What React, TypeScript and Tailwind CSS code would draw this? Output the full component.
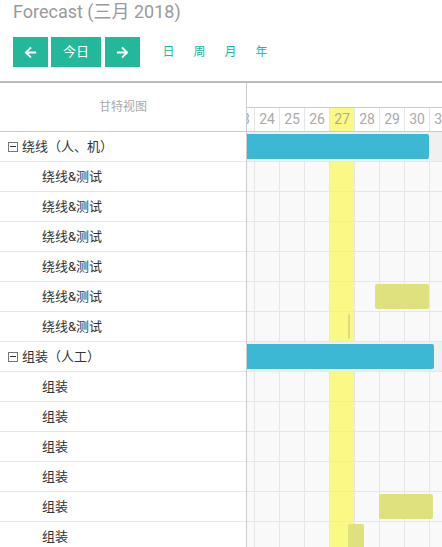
import { FaArrowLeft, FaArrowRight } from "react-icons/fa";

const days = [23, 24, 25, 26, 27, 28, 29, 30, 31];

type Bar = { left: number; width: number; tone: string };
type Row = { kind: "group" | "task"; label: string; bar?: Bar };

const blue = "#3db8d4";
const olive = "#dfe17e";

const rows: Row[] = [
  { kind: "group", label: "绕线（人、机）", bar: { left: -6, width: 188, tone: blue } },
  { kind: "task", label: "绕线&测试" },
  { kind: "task", label: "绕线&测试" },
  { kind: "task", label: "绕线&测试" },
  { kind: "task", label: "绕线&测试" },
  { kind: "task", label: "绕线&测试", bar: { left: 128, width: 54, tone: olive } },
  { kind: "task", label: "绕线&测试", bar: { left: 101, width: 2, tone: "#dcdb86" } },
  { kind: "group", label: "组装（人工）", bar: { left: -6, width: 193, tone: blue } },
  { kind: "task", label: "组装" },
  { kind: "task", label: "组装" },
  { kind: "task", label: "组装" },
  { kind: "task", label: "组装" },
  { kind: "task", label: "组装", bar: { left: 132, width: 54, tone: olive } },
  { kind: "task", label: "组装", bar: { left: 101, width: 16, tone: olive } },
];

const font = { fontFamily: '"Roboto", "Noto Sans CJK SC", sans-serif' };

function MinusBox() {
  return (
    <span className="flex h-[10px] w-[10px] items-center justify-center border border-[#777] bg-white">
      <span className="h-px w-[6px] bg-[#333]" />
    </span>
  );
}

export default function App() {
  return (
    <div className="min-h-screen bg-white" style={font}>
      <div className="px-[13px]">
        <h1 className="h-[24px] text-[18px] leading-[24px] text-[#9a9a9a]">Forecast (三月 2018)</h1>
        <div className="mt-[13px] flex h-[30px] items-center">
          <button className="flex h-[30px] w-[35px] items-center justify-center bg-[#22b899] text-white">
            <FaArrowLeft className="h-[13px] w-[13px]" />
          </button>
          <button className="ml-[3px] h-[30px] w-[50px] bg-[#22b899] text-[13px] text-white">今日</button>
          <button className="ml-[4px] flex h-[30px] w-[35px] items-center justify-center bg-[#22b899] text-white">
            <FaArrowRight className="h-[13px] w-[13px]" />
          </button>
          <div className="ml-[13px] flex text-[12px] text-[#22b899]">
            {["日", "周", "月", "年"].map((t) => (
              <span key={t} className="w-[31px] text-center">
                {t}
              </span>
            ))}
          </div>
        </div>
      </div>

      <div className="mt-[14px] flex border-t-2 border-[#bbb]">
        <div className="w-[247px] shrink-0 border-r border-[#ccc]">
          <div className="flex h-[49px] items-center justify-center border-b border-[#ccc] text-[12px] text-[#aaa]">
            甘特视图
          </div>
          {rows.map((r, i) =>
            r.kind === "group" ? (
              <div key={i} className="flex h-[30px] items-center gap-[4px] border-b border-[#e6e6e6] pl-[8px] text-[13px] text-[#333]">
                <MinusBox />
                <span>{r.label}</span>
              </div>
            ) : (
              <div key={i} className="flex h-[30px] items-center border-b border-[#e6e6e6] pl-[42px] text-[13px] text-[#333]">
                {r.label}
              </div>
            )
          )}
        </div>

        <div className="min-w-0 flex-1 overflow-hidden">
          <div className="h-[25px] border-b border-[#ccc]" />
          <div className="flex h-[24px] border-b border-[#ccc] -ml-[17px]">
            {days.map((d) => (
              <div
                key={d}
                className={`flex h-full w-[25px] shrink-0 items-center justify-center border-r border-[#e6e6e6] text-[14px] text-[#aaa] ${d === 27 ? "bg-[#fbf985]" : "bg-white"}`}
              >
                {d}
              </div>
            ))}
          </div>
          {rows.map((r, i) => (
            <div
              key={i}
              className={`relative h-[30px] overflow-hidden border-b border-[#e6e6e6] ${r.kind === "group" ? "bg-[#f0f0f0]" : "bg-[#f9f9f9]"}`}
            >
              {r.kind === "task" && (
                <div className="flex h-full -ml-[17px]">
                  {days.map((d) => (
                    <div
                      key={d}
                      className={`h-full w-[25px] shrink-0 border-r border-[#e6e6e6] ${d === 27 ? "bg-[#fbf985]" : ""}`}
                    />
                  ))}
                </div>
              )}
              {r.bar && (
                <div
                  className="absolute top-[2px] h-[25px] rounded-[2px]"
                  style={{ left: r.bar.left, width: r.bar.width, backgroundColor: r.bar.tone }}
                />
              )}
            </div>
          ))}
        </div>
      </div>
    </div>
  );
}
